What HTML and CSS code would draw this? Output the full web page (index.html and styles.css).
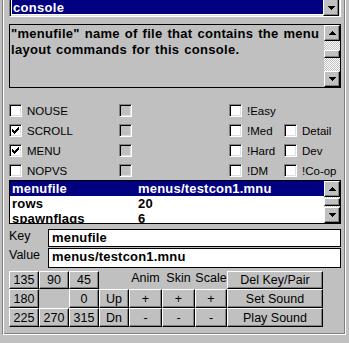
FILE: index.html
```html
<!DOCTYPE html>
<html lang="en">
<head>
  <meta charset="UTF-8">
  <title>Entity</title>
  <link rel="stylesheet" href="styles.css">
</head>
<body>
  <div class="panel">
    <div class="combo">
      <div class="combo-field">console</div>
      <div class="btn3d arrow-btn">
        <svg width="7" height="4"><path d="M0 0h7v1H0zM1 1h5v1H1zM2 2h3v1H2zM3 3h1v1H3z"/></svg>
      </div>
    </div>

    <div class="desc">
      <div class="desc-text">"menufile" name of file that contains the menu layout commands for this console.</div>
      <div class="vscroll">
        <div class="btn3d arrow-btn">
          <svg width="7" height="4"><path d="M3 0h1v1H3zM2 1h3v1H2zM1 2h5v1H1zM0 3h7v1H0z"/></svg>
        </div>
        <div class="track desc-track-top"></div>
        <div class="btn3d thumb"></div>
        <div class="track fill"></div>
        <div class="btn3d arrow-btn">
          <svg width="7" height="4"><path d="M0 0h7v1H0zM1 1h5v1H1zM2 2h3v1H2zM3 3h1v1H3z"/></svg>
        </div>
      </div>
    </div>

    <div class="flags">
      <div class="flag"><span class="check"></span>NOUSE</div>
      <div class="flag"><span class="check off"></span></div>
      <div class="flag"><span class="check"></span>!Easy</div>
      <div class="flag"></div>

      <div class="flag"><span class="check"><svg width="7" height="7"><path d="M6 0h1v1H6zM5 1h2v1H5zM0 2h1v1H0zM4 2h3v1H4zM0 3h2v1H0zM3 3h3v1H3zM0 4h5v1H0zM1 5h3v1H1zM2 6h1v1H2z"/></svg></span>SCROLL</div>
      <div class="flag"><span class="check off"></span></div>
      <div class="flag"><span class="check"></span>!Med</div>
      <div class="flag"><span class="check"></span>Detail</div>

      <div class="flag"><span class="check"><svg width="7" height="7"><path d="M6 0h1v1H6zM5 1h2v1H5zM0 2h1v1H0zM4 2h3v1H4zM0 3h2v1H0zM3 3h3v1H3zM0 4h5v1H0zM1 5h3v1H1zM2 6h1v1H2z"/></svg></span>MENU</div>
      <div class="flag"><span class="check off"></span></div>
      <div class="flag"><span class="check"></span>!Hard</div>
      <div class="flag"><span class="check"></span>Dev</div>

      <div class="flag"><span class="check"></span>NOPVS</div>
      <div class="flag"><span class="check off"></span></div>
      <div class="flag"><span class="check"></span>!DM</div>
      <div class="flag"><span class="check"></span>!Co-op</div>
    </div>

    <div class="list">
      <div class="list-rows">
        <div class="row selected"><span class="key">menufile</span><span>menus/testcon1.mnu</span></div>
        <div class="row"><span class="key">rows</span><span>20</span></div>
        <div class="row"><span class="key">spawnflags</span><span>6</span></div>
      </div>
      <div class="vscroll">
        <div class="btn3d arrow-btn">
          <svg width="7" height="4"><path d="M3 0h1v1H3zM2 1h3v1H2zM1 2h5v1H1zM0 3h7v1H0z"/></svg>
        </div>
        <div class="track fill"></div>
        <div class="btn3d thumb"></div>
        <div class="track fill"></div>
        <div class="btn3d arrow-btn">
          <svg width="7" height="4"><path d="M0 0h7v1H0zM1 1h5v1H1zM2 2h3v1H2zM3 3h1v1H3z"/></svg>
        </div>
      </div>
    </div>

    <div class="field">
      <label>Key</label>
      <div class="edit key-edit">menufile</div>
    </div>
    <div class="field value-field">
      <label>Value</label>
      <div class="edit value-edit">menus/testcon1.mnu</div>
    </div>

    <div class="pad">
      <div class="btn3d pad-btn">135</div>
      <div class="btn3d pad-btn">90</div>
      <div class="btn3d pad-btn">45</div>
      <div></div>
      <div class="pad-label">Anim</div>
      <div class="pad-label">Skin</div>
      <div class="pad-label">Scale</div>
      <div class="btn3d pad-btn">Del Key/Pair</div>

      <div class="btn3d pad-btn">180</div>
      <div></div>
      <div class="btn3d pad-btn">0</div>
      <div class="btn3d pad-btn">Up</div>
      <div class="btn3d pad-btn">+</div>
      <div class="btn3d pad-btn">+</div>
      <div class="btn3d pad-btn">+</div>
      <div class="btn3d pad-btn">Set Sound</div>

      <div class="btn3d pad-btn">225</div>
      <div class="btn3d pad-btn">270</div>
      <div class="btn3d pad-btn">315</div>
      <div class="btn3d pad-btn">Dn</div>
      <div class="btn3d pad-btn">-</div>
      <div class="btn3d pad-btn">-</div>
      <div class="btn3d pad-btn">-</div>
      <div class="btn3d pad-btn">Play Sound</div>
    </div>
  </div>
</body>
</html>
```

FILE: styles.css
```css
body {
  margin: 0;
  background-color: #c0c0c0;
  font-family: "Liberation Sans", Arial, sans-serif;
  font-size: 12px;
  color: #000000;
  overflow: hidden;
}
.panel {
  box-sizing: border-box;
  width: 344px;
  height: 339px;
  margin-left: 2px;
  padding: 0 4px 0 6px;
  border-left: 1px solid #808080;
  border-right: 1px solid #ffffff;
  border-bottom: 1px solid #ffffff;
  box-shadow: inset 1px 0 #ffffff, inset -1px -1px #808080;
}
.btn3d {
  box-sizing: border-box;
  background-color: #c0c0c0;
  border: 1px solid;
  border-color: #ffffff #000000 #000000 #ffffff;
  box-shadow: inset -1px -1px #808080;
}
.arrow-btn {
  width: 16px;
  height: 16px;
  display: flex;
  align-items: center;
  justify-content: center;
  flex-shrink: 0;
}
.arrow-btn svg {
  display: block;
  shape-rendering: crispEdges;
}
.combo {
  box-sizing: border-box;
  display: flex;
  height: 21px;
  margin-top: -4px;
  padding: 1px;
  border: 1px solid;
  border-color: #808080 #ffffff #ffffff #808080;
  box-shadow: inset 1px 1px #000000, inset -1px -1px #dfdfdf;
  background-color: #ffffff;
}
.combo-field {
  flex: 1;
  margin: 1px 0 1px 1px;
  padding-left: 1px;
  background-color: #000080;
  color: #ffffff;
  font-weight: bold;
  font-size: 13px;
  letter-spacing: 0.3px;
  line-height: 18px;
}
.combo .arrow-btn {
  height: 17px;
  margin-top: 1px;
}
.desc {
  box-sizing: border-box;
  display: flex;
  height: 64px;
  margin-top: 7px;
  border: 1px solid #000000;
}
.desc-text {
  flex: 1;
  padding: 1px 0 0 1px;
  font-weight: bold;
  font-size: 13px;
  line-height: 16px;
  letter-spacing: 0.3px;
  word-spacing: 1px;
}
.vscroll {
  display: flex;
  flex-direction: column;
  width: 16px;
}
.track {
  background-image: repeating-conic-gradient(#ffffff 0 25%, #c0c0c0 0 50%);
  background-size: 2px 2px;
}
.desc-track-top {
  height: 9px;
}
.track.fill {
  flex: 1;
}
.thumb {
  height: 8px;
}
.flags {
  display: grid;
  grid-template-columns: 110px 110px 55px 1fr;
  grid-auto-rows: 13px;
  row-gap: 7px;
  margin-top: 16px;
  font-size: 11.5px;
}
.flag {
  display: flex;
  align-items: center;
  gap: 5px;
}
.check {
  box-sizing: border-box;
  width: 13px;
  height: 13px;
  padding: 2px;
  border: 1px solid;
  border-color: #808080 #ffffff #ffffff #808080;
  box-shadow: inset 1px 1px #000000, inset -1px -1px #dfdfdf;
  background-color: #ffffff;
}
.check svg {
  display: block;
  shape-rendering: crispEdges;
}
.check.off {
  background-color: #c0c0c0;
}
.list {
  box-sizing: border-box;
  display: flex;
  height: 44px;
  margin-top: 3px;
  border: 1px solid #000000;
  background-color: #ffffff;
}
.list-rows {
  flex: 1;
  overflow: hidden;
  font-weight: bold;
  font-size: 13px;
  letter-spacing: 0.2px;
}
.row {
  display: flex;
  height: 15px;
  line-height: 15px;
  padding-left: 2px;
}
.row.selected {
  background-color: #000080;
  color: #ffffff;
}
.key {
  width: 126px;
}
.field {
  display: flex;
  margin-top: 5px;
  font-size: 12.5px;
}
.value-field {
  margin-top: 1px;
}
.field label {
  width: 39px;
  line-height: 14px;
}
.edit {
  box-sizing: border-box;
  flex: 1;
  padding-left: 3px;
  border: 1px solid #000000;
  background-color: #ffffff;
  font-weight: bold;
  font-size: 13px;
  letter-spacing: 0.2px;
  line-height: 16px;
}
.key-edit {
  height: 18px;
}
.value-edit {
  height: 20px;
}
.pad {
  display: grid;
  grid-template-columns: 30px 30px 30px 30px 33px 33px 32px 96px;
  grid-template-rows: 18px 19px 19px;
  margin-top: 3px;
  font-size: 12.5px;
}
.pad-btn {
  display: flex;
  align-items: center;
  justify-content: center;
}
.pad-label {
  text-align: center;
  line-height: 14px;
}
```
